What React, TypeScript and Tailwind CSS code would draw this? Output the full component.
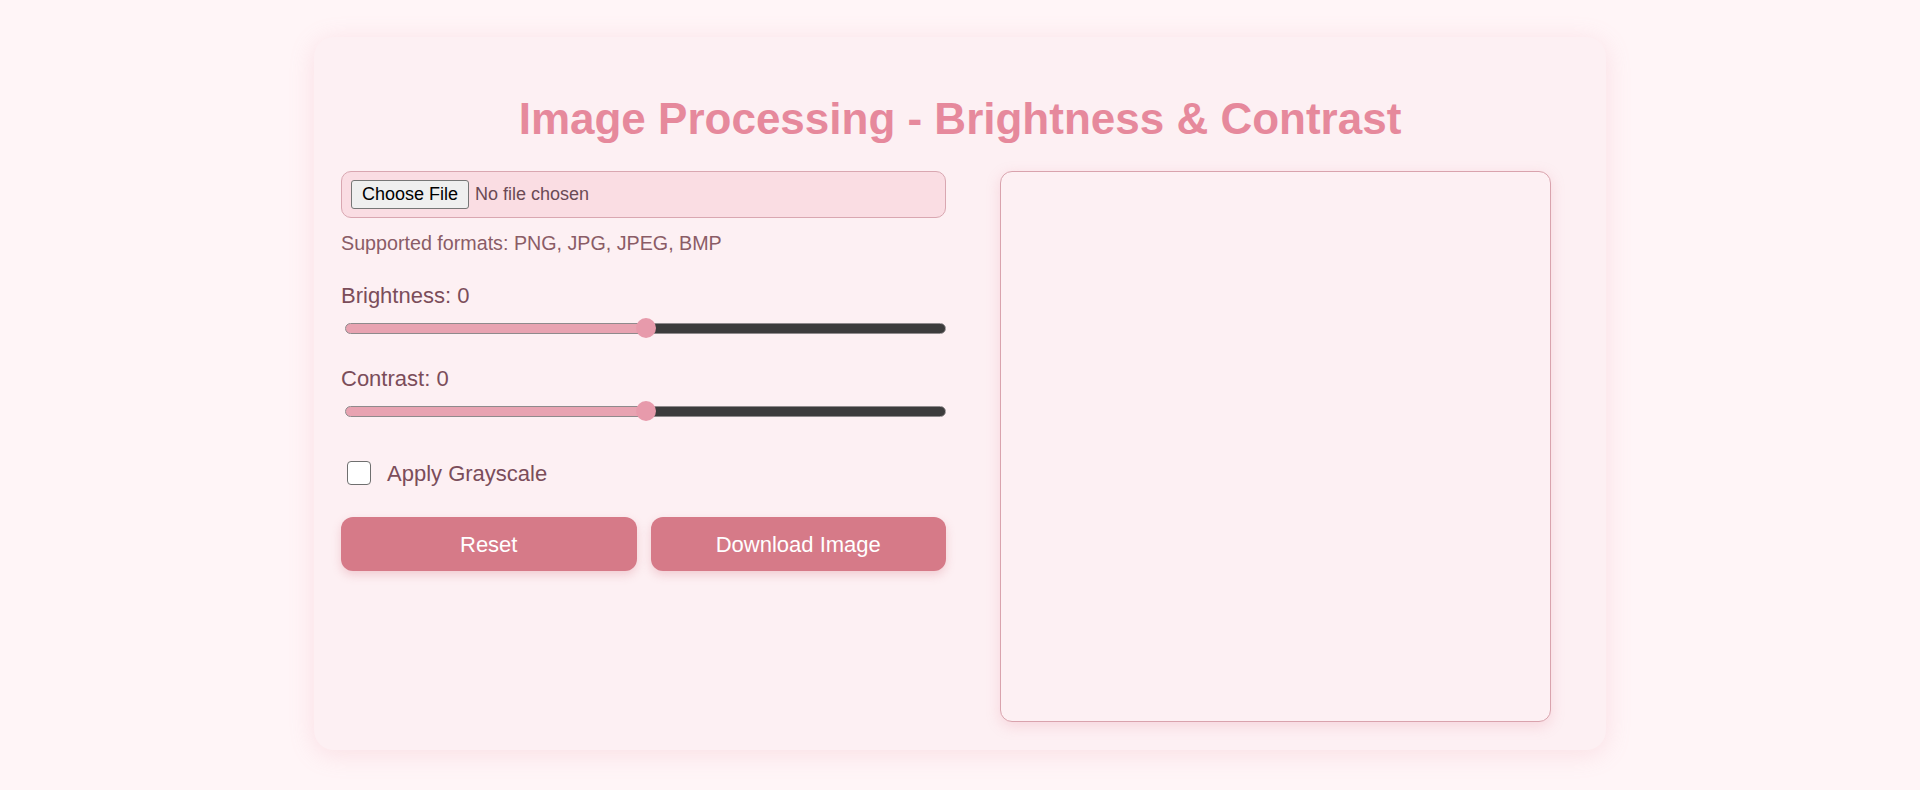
import { useState } from 'react'

const Slider = ({
  label,
  value,
  onChange,
}: {
  label: string
  value: number
  onChange: (v: number) => void
}) => {
  const pct = ((value + 100) / 200) * 100
  return (
    <div className="flex flex-col">
      <label className="text-[22px] leading-[25px] text-[#7b4d5a]">
        {label}: {value}
      </label>
      <div className="mt-[10px] flex h-[20px] items-center">
        <input
          type="range"
          min={-100}
          max={100}
          value={value}
          onChange={(e) => onChange(Number(e.target.value))}
          className="ml-[4px] h-[11px] w-[604px] cursor-pointer appearance-none rounded-full border border-[#8f8a8c] outline-none [&::-webkit-slider-thumb]:h-[20px] [&::-webkit-slider-thumb]:w-[20px] [&::-webkit-slider-thumb]:appearance-none [&::-webkit-slider-thumb]:rounded-full [&::-webkit-slider-thumb]:bg-[#e79aab]"
          style={{
            background: `linear-gradient(to right, #e8a3b1 ${pct}%, #3c3c3c ${pct}%)`,
          }}
        />
      </div>
    </div>
  )
}

export default function App() {
  const [brightness, setBrightness] = useState(0)
  const [contrast, setContrast] = useState(0)
  const [grayscale, setGrayscale] = useState(false)

  return (
    <div className="min-h-screen bg-[#fff5f7] pt-[37px] pb-[40px] font-['Liberation_Sans',Arial,sans-serif]">
      <div className="mx-auto w-[1292px] rounded-[20px] bg-[#fdf0f3] px-[27px] pt-[28px] pb-[28px] shadow-[0_4px_26px_rgba(232,137,155,0.2)]">
        <h1 className="mt-[29px] mb-[28px] text-center text-[44px] leading-[49px] font-bold text-[#e6899c]">
          Image Processing - Brightness &amp; Contrast
        </h1>

        <div className="flex gap-[54px]">
          {/* controls */}
          <div className="flex w-[605px] flex-col">
            <div className="flex h-[47px] items-center rounded-[10px] border border-[#d9a7b1] bg-[#fadde3] px-[9px]">
              <input
                type="file"
                accept=".png,.jpg,.jpeg,.bmp"
                className="text-[18px] leading-[21px] text-[#6b4a55] file:mr-[6px] file:rounded-[3px] file:border file:border-[#767676] file:bg-[#efefef] file:px-[10px] file:py-[3px] file:text-[18px] file:leading-[21px] file:text-black"
              />
            </div>
            <p className="mt-[14px] text-[19.7px] leading-[23px] text-[#8a5c66]">
              Supported formats: PNG, JPG, JPEG, BMP
            </p>

            <div className="mt-[28px]">
              <Slider label="Brightness" value={brightness} onChange={setBrightness} />
            </div>
            <div className="mt-[28px]">
              <Slider label="Contrast" value={contrast} onChange={setContrast} />
            </div>

            <label className="mt-[40px] flex h-[24px] items-center gap-[16px] pl-[6px]">
              <input
                type="checkbox"
                checked={grayscale}
                onChange={(e) => setGrayscale(e.target.checked)}
                className="h-[24px] w-[24px] appearance-none rounded-[4px] border-[1.5px] border-[#6f6f6f] bg-white checked:bg-[#d67a88]"
              />
              <span className="text-[22px] leading-[25px] text-[#7b4d5a]">
                Apply Grayscale
              </span>
            </label>

            <div className="mt-[32px] flex gap-[14px]">
              <button
                onClick={() => {
                  setBrightness(0)
                  setContrast(0)
                  setGrayscale(false)
                }}
                className="h-[54px] flex-1 rounded-[12px] bg-[#d67a88] text-[22px] text-white shadow-[0_4px_10px_rgba(214,122,136,0.3)]"
              >
                Reset
              </button>
              <button className="h-[54px] flex-1 rounded-[12px] bg-[#d67a88] text-[22px] text-white shadow-[0_4px_10px_rgba(214,122,136,0.3)]">
                Download Image
              </button>
            </div>
          </div>

          {/* preview */}
          <div className="h-[551px] w-[551px] rounded-[12px] border border-[#d9a3ad] bg-[#fdf0f3] shadow-[0_4px_14px_rgba(232,137,155,0.25)]" />
        </div>
      </div>
    </div>
  )
}
